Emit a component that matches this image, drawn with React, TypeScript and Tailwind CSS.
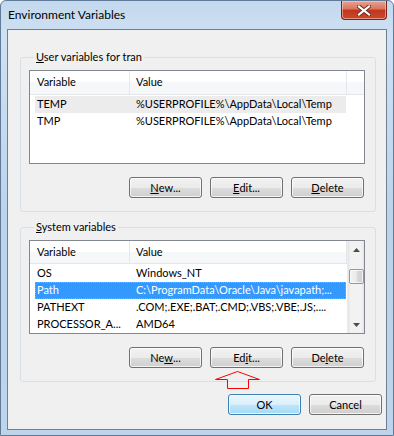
import React from "react";

function Btn({ children, def = false }: { children: React.ReactNode; def?: boolean }) {
  return (
    <div
      className={`w-[73px] h-[21px] rounded-[3px] border flex items-center justify-center text-[11px] leading-none text-black shadow-[inset_0_0_0_1px_rgba(255,255,255,0.75)] ${
        def
          ? "border-[#3c7fb1] bg-[linear-gradient(#eaf6fd_0%,#d9f0fc_50%,#bee6fd_50%,#a7d9f5_100%)]"
          : "border-[#707070] bg-[linear-gradient(#f2f2f2_0%,#ebebeb_50%,#dddddd_50%,#cfcfcf_100%)]"
      }`}
    >
      {children}
    </div>
  );
}

function Header({ scroll }: { scroll?: boolean }) {
  return (
    <div className="flex h-[24px] bg-[linear-gradient(#ffffff_0%,#ffffff_50%,#f6f7f8_50%,#f6f7f8_100%)] border-b border-[#e4e7ea] text-[11px] text-black">
      <div className="w-[100px] pl-[7px] flex items-center border-r border-[#e3e8ee]">Variable</div>
      <div className="w-[217px] pl-[6px] flex items-center border-r border-[#e3e8ee]">Value</div>
      {!scroll && <div className="flex-1" />}
    </div>
  );
}

type Row = { name: string; value: string; state?: "hover" | "sel" };

function Rows({ rows }: { rows: Row[] }) {
  return (
    <div className="flex flex-col mt-[1px]">
      {rows.map((r) => (
        <div
          key={r.name}
          className={`ml-[5px] w-[311px] h-[17px] flex items-center text-[11px] whitespace-nowrap ${
            r.state === "sel"
              ? "bg-[#3399ff] text-white outline-1 outline-dotted outline-[#e89a3c] -outline-offset-1"
              : r.state === "hover"
              ? "bg-[#ececec] text-black"
              : "text-black"
          }`}
        >
          <div className="w-[95px] pl-[2px] overflow-hidden">{r.name}</div>
          <div className="flex-1 pl-[6px] overflow-hidden">{r.value}</div>
        </div>
      ))}
    </div>
  );
}

function ScrollBar() {
  return (
    <div className="w-[17px] h-full flex flex-col bg-[linear-gradient(90deg,#e3e3e3_0%,#f2f2f2_15%,#f2f2f2_85%,#e3e3e3_100%)] border-l border-[#ececec]">
      <div className="h-[17px] flex items-center justify-center">
        <svg width="7" height="4" viewBox="0 0 7 4">
          <polygon points="3.5,0 7,4 0,4" fill="#4d4d4d" />
        </svg>
      </div>
      <div className="flex-1 flex flex-col items-center">
        <div className="mt-[11px] w-[15px] h-[15px] rounded-[2px] border border-[#979797] bg-[linear-gradient(90deg,#f3f3f3_0%,#e8e8e8_50%,#d9d9d9_51%,#cfcfcf_100%)] shadow-[inset_0_0_0_1px_rgba(255,255,255,0.7)]" />
      </div>
      <div className="h-[17px] flex items-center justify-center">
        <svg width="7" height="4" viewBox="0 0 7 4">
          <polygon points="0,0 7,0 3.5,4" fill="#4d4d4d" />
        </svg>
      </div>
    </div>
  );
}

function Group({
  label,
  children,
}: {
  label: React.ReactNode;
  children: React.ReactNode;
}) {
  return (
    <fieldset className="w-[356px] border border-[#d5dfe5] rounded-[3px] pl-[8px] pr-[10px] pb-[13px] pt-[5px]">
      <legend className="ml-[5px] px-[2px] text-[11px] leading-[16px] text-black">{label}</legend>
      {children}
    </fieldset>
  );
}

export default function App() {
  const userRows: Row[] = [
    { name: "TEMP", value: "%USERPROFILE%\\AppData\\Local\\Temp", state: "hover" },
    { name: "TMP", value: "%USERPROFILE%\\AppData\\Local\\Temp" },
  ];
  const sysRows: Row[] = [
    { name: "OS", value: "Windows_NT" },
    { name: "Path", value: "C:\\ProgramData\\Oracle\\Java\\javapath;...", state: "sel" },
    { name: "PATHEXT", value: ".COM;.EXE;.BAT;.CMD;.VBS;.VBE;.JS;...." },
    { name: "PROCESSOR_A...", value: "AMD64" },
  ];

  return (
    <div className="w-[394px] h-[436px] font-['Lato','Noto_Sans',sans-serif] rounded-t-[6px] border border-[#5f7b98] bg-[linear-gradient(180deg,#c3d8ee_0%,#cfe1f3_8%,#bcd3ea_50%,#bed4ea_100%)] flex flex-col px-[6px] pb-[5px] overflow-hidden">
      {/* title bar */}
      <div className="h-[28px] flex items-start justify-between">
        <div className="mt-[6px] ml-[1px] text-[12px] leading-[16px] text-black">Environment Variables</div>
        <div className="w-[46px] h-[19px] rounded-b-[4px] border border-t-0 border-[#7a2218] bg-[linear-gradient(#e8a493_0%,#d9735d_45%,#c2351c_50%,#c94a2c_100%)] shadow-[inset_0_0_0_1px_rgba(255,220,210,0.5)] flex items-center justify-center">
          <svg width="14" height="11" viewBox="0 0 14 11">
            <path d="M2 1.5 L12 9.5 M12 1.5 L2 9.5" stroke="#6a2a20" strokeWidth="4" strokeLinecap="square" />
            <path d="M2 1.5 L12 9.5 M12 1.5 L2 9.5" stroke="#ffffff" strokeWidth="2.2" strokeLinecap="square" />
          </svg>
        </div>
      </div>
      {/* client area */}
      <div className="relative flex-1 border border-[#6f8092] bg-[#f0f0f0] flex flex-col items-start pl-[12px] pt-[19px]">
        <Group
          label={
            <>
              <span className="underline">U</span>ser variables for tran
            </>
          }
        >
          <div className="w-[336px] h-[94px] border border-[#828790] bg-white overflow-hidden">
            <Header />
            <Rows rows={userRows} />
          </div>
          <div className="mt-[13px] flex justify-end gap-[8px] pr-[1px]">
            <Btn>
              <span className="underline">N</span>ew...
            </Btn>
            <Btn>
              <span className="underline">E</span>dit...
            </Btn>
            <Btn>
              <span className="underline">D</span>elete
            </Btn>
          </div>
        </Group>

        <div className="mt-[7px]">
          <Group
            label={
              <>
                <span className="underline">S</span>ystem variables
              </>
            }
          >
            <div className="w-[336px] h-[94px] border border-[#828790] bg-white overflow-hidden flex">
              <div className="w-[317px] flex flex-col">
                <Header scroll />
                <Rows rows={sysRows} />
              </div>
              <ScrollBar />
            </div>
            <div className="mt-[13px] flex justify-end gap-[8px] pr-[1px]">
              <Btn>
                Ne<span className="underline">w</span>...
              </Btn>
              <Btn>
                Ed<span className="underline">i</span>t...
              </Btn>
              <Btn>
                De<span className="underline">l</span>ete
              </Btn>
            </div>
          </Group>
        </div>

        <div className="mt-[12px] w-[362px] flex justify-end gap-[8px]">
          <Btn def>OK</Btn>
          <Btn>Cancel</Btn>
        </div>

        {/* red annotation arrow */}
        <svg className="absolute left-[206px] top-[340px]" width="48" height="20" viewBox="0 0 48 20">
          <polygon
            points="23.5,1.5 45.5,9.5 34.5,9.5 34.5,18.5 13.5,18.5 13.5,9.5 1.5,9.5"
            fill="none"
            stroke="#ff0000"
            strokeWidth="1"
          />
        </svg>
      </div>
    </div>
  );
}
